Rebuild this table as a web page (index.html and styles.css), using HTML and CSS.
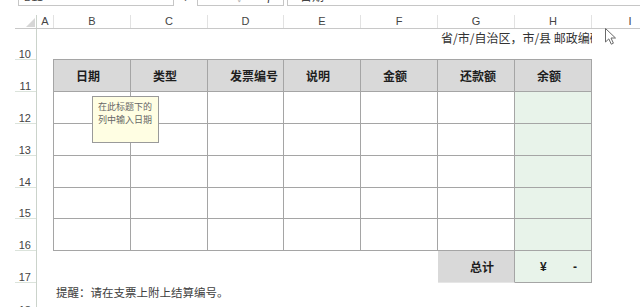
FILE: index.html
```html
<!DOCTYPE html>
<html lang="zh-CN">
<head>
<meta charset="utf-8">
<title>账单</title>
<link rel="stylesheet" href="styles.css">
</head>
<body>
<div class="app">
  <div class="formula-bar">
    <div class="name-box"><span>B11</span></div>
    <div class="fb-grip">⋮</div>
    <div class="fb-buttons"><span class="fb-x">✕</span><span class="fb-check">✓</span><span class="fb-fx">fx</span></div>
    <div class="fb-input"><span>日期</span></div>
  </div>

  <div class="col-heads">
    <div class="corner"><svg width="9" height="9" viewBox="0 0 9 9"><polygon points="9,0 9,9 0,9" fill="#d6d6d6"/></svg></div>
    <div class="ch">A</div>
    <div class="ch">B</div>
    <div class="ch">C</div>
    <div class="ch">D</div>
    <div class="ch">E</div>
    <div class="ch">F</div>
    <div class="ch">G</div>
    <div class="ch">H</div>
    <div class="ch">I</div>
  </div>

  <div class="sheet">
    <div class="row-heads">
      <div class="rh r31">10</div>
      <div class="rh">11</div>
      <div class="rh">12</div>
      <div class="rh">13</div>
      <div class="rh">14</div>
      <div class="rh r31">15</div>
      <div class="rh">16</div>
      <div class="rh">17</div>
      <div class="rh last">18</div>
    </div>

    <div class="cells">
      <div class="title-row">
        <div class="title-cell">省/市/自治区，市/县 邮政编码</div>
      </div>

      <div class="ledger">
        <div class="c hd first">日期</div>
        <div class="c hd">类型</div>
        <div class="c hd">发票编号</div>
        <div class="c hd">说明</div>
        <div class="c hd">金额</div>
        <div class="c hd">还款额</div>
        <div class="c hd">余额</div>

        <div class="c first"></div><div class="c"></div><div class="c"></div><div class="c"></div><div class="c"></div><div class="c"></div><div class="c bal"></div>
        <div class="c first"></div><div class="c"></div><div class="c"></div><div class="c"></div><div class="c"></div><div class="c"></div><div class="c bal"></div>
        <div class="c first"></div><div class="c"></div><div class="c"></div><div class="c"></div><div class="c"></div><div class="c"></div><div class="c bal"></div>
        <div class="c first"></div><div class="c"></div><div class="c"></div><div class="c"></div><div class="c"></div><div class="c"></div><div class="c bal"></div>
        <div class="c first"></div><div class="c"></div><div class="c"></div><div class="c"></div><div class="c"></div><div class="c"></div><div class="c bal"></div>

        <div class="total-label">总计</div>
        <div class="total-value"><span>¥</span><span>-</span></div>

        <div class="tip">在此标题下的<br>列中输入日期</div>
      </div>

      <div class="note">提醒：请在支票上附上结算编号。</div>
    </div>
  </div>

  <svg class="cursor" width="13" height="19" viewBox="0 0 13 19"><path d="M1.5 1.5 L1.5 15 L4.8 11.9 L7.3 17.2 L9.4 16.2 L7 11 L11.5 11 Z" fill="#fff" stroke="#6a6a6a" stroke-width="1" stroke-linejoin="round"/></svg>
</div>
</body>
</html>
```

FILE: styles.css
```css
* { box-sizing: border-box; }

html, body {
  margin: 0;
  padding: 0;
  background: #fff;
}

body {
  width: 640px;
  height: 307px;
  overflow: hidden;
  font-family: "Liberation Sans", "Noto Sans CJK SC", sans-serif;
  color: #333;
}

.app {
  position: relative;
  width: 640px;
  height: 307px;
  overflow: hidden;
}

/* ---------- formula bar (only its bottom edge is visible) ---------- */
.formula-bar {
  display: flex;
  align-items: flex-end;
  height: 6px;
  overflow: hidden;
  font-size: 11px;
  color: #444;
}

.name-box {
  margin-left: 18px;
  width: 156px;
  height: 18px;
  border: 1px solid #c6c6c6;
  border-top: 0;
  padding-left: 5px;
  line-height: 18px;
  flex: none;
}

.fb-grip {
  width: 23px;
  height: 18px;
  line-height: 18px;
  text-align: center;
  color: #666;
  flex: none;
}

.fb-buttons {
  width: 87px;
  height: 18px;
  border: 1px solid #c6c6c6;
  border-top: 0;
  display: flex;
  align-items: center;
  padding-left: 16px;
  gap: 14px;
  flex: none;
}

.fb-x, .fb-check { color: #b5b5b5; }
.fb-fx { margin-left: 9px; font-style: italic; color: #333; font-family: "Liberation Serif", serif; font-size: 12px; }

.fb-input {
  margin-left: 3px;
  flex: 1;
  height: 18px;
  border-left: 1px solid #c6c6c6;
  border-bottom: 1px solid #c6c6c6;
  padding-left: 12px;
  line-height: 18px;
  font-size: 12px;
}

/* ---------- column headers ---------- */
.col-heads {
  display: grid;
  grid-template-columns: 22px 17px 77px 77px 76px 77px 77px 77px 77px 77px;
  margin-top: 9px;
  margin-left: 15px;
  height: 14px;
  border-bottom: 1px solid #c8c8c8;
  font-size: 11px;
  color: #444;
}

.corner {
  border-right: 1px solid #cbd3cb;
  display: flex;
  align-items: flex-end;
  justify-content: flex-end;
  padding: 0 1px 1px 0;
}
.corner svg { display: block; }

.ch {
  border-right: 1px solid #e2e2e2;
  text-align: center;
  line-height: 13px;
}

/* ---------- sheet body ---------- */
.sheet {
  display: flex;
}

.row-heads {
  width: 37px;
  flex: none;
  border-right: 1px solid #cbd3cb;
  display: flex;
  flex-direction: column;
  font-size: 11px;
  color: #444;
}

.rh {
  height: 32px;
  flex: none;
  margin-left: 15px;
  border-bottom: 1px solid #dbe3db;
  display: flex;
  align-items: flex-end;
  justify-content: flex-end;
  padding-right: 5px;
  line-height: 10px;
}
.rh.r31 { height: 31px; }
.rh.last { border-bottom: 0; }

.cells {
  flex: 1;
  padding-left: 16px;
  display: flex;
  flex-direction: column;
}

.title-row {
  height: 30px;
  display: grid;
  grid-template-columns: 78px 77px 76px 77px 77px 77px 77px;
}

.title-cell {
  grid-column: 6 / 8;
  overflow: hidden;
  white-space: nowrap;
  padding: 2px 0 0 3px;
  font-family: "Noto Sans CJK SC", sans-serif;
  font-size: 12px;
  line-height: 14px;
  color: #333;
}

/* ---------- ledger table ---------- */
.ledger {
  position: relative;
  display: grid;
  grid-template-columns: 78px 77px 76px 77px 77px 77px 77px;
  grid-template-rows: 33px 32px 32px 32px 31px 32px 32px;
  width: 539px;
}

.c {
  border-right: 1px solid #a5a5a5;
  border-bottom: 1px solid #a5a5a5;
}
.c.first { border-left: 1px solid #a5a5a5; }

.c.hd {
  border-top: 1px solid #a5a5a5;
  background: #d9d9d9;
  font-family: "Noto Sans CJK SC", sans-serif;
  font-weight: 700;
  font-size: 12px;
  color: #1e1e1e;
  padding-left: 22px;
  display: flex;
  align-items: center;
}

.c.bal { background: #e8f3ea; }

.total-label {
  grid-column: 6;
  background: #d9d9d9;
  border-right: 1px solid #a5a5a5;
  border-bottom: 1px solid #e6e6e6;
  display: flex;
  align-items: center;
  justify-content: flex-end;
  padding-right: 20px;
  font-family: "Noto Sans CJK SC", sans-serif;
  font-weight: 700;
  font-size: 12px;
  color: #1e1e1e;
}

.total-value {
  grid-column: 7;
  background: #e8f3ea;
  border-right: 1px solid #a5a5a5;
  border-bottom: 1px solid #a5a5a5;
  display: flex;
  align-items: center;
  justify-content: space-between;
  padding: 0 14px 0 25px;
  font-weight: 700;
  font-size: 12px;
  color: #1e1e1e;
}

.tip {
  position: absolute;
  left: 39px;
  top: 37px;
  width: 67px;
  height: 47px;
  background: #fffee3;
  border: 1px solid #9a9a9a;
  padding: 3px 0 0 5px;
  font-family: "Noto Sans CJK SC", sans-serif;
  font-size: 9px;
  line-height: 13px;
  color: #666;
  white-space: nowrap;
}

.note {
  padding: 2px 0 0 3px;
  font-family: "Noto Sans CJK SC", sans-serif;
  font-size: 11.5px;
  line-height: 14px;
  color: #404040;
  white-space: nowrap;
}

.cursor {
  position: absolute;
  left: 604px;
  top: 27px;
}
```
